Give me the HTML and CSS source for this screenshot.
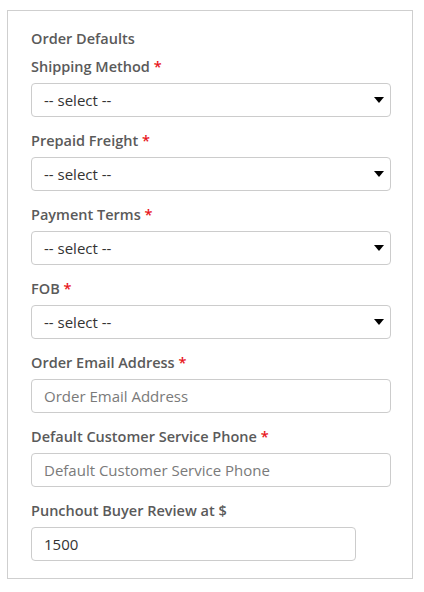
FILE: index.html
```html
<!DOCTYPE html>
<html>
<head>
<meta charset="utf-8">
<link rel="stylesheet" href="styles.css">
</head>
<body>
<div class="panel">
  <div class="heading">Order Defaults</div>
  <div class="field">
    <div class="label">Shipping Method <span class="req">*</span></div>
    <div class="control select"><span>-- select --</span><span class="caret"></span></div>
  </div>
  <div class="field">
    <div class="label">Prepaid Freight <span class="req">*</span></div>
    <div class="control select"><span>-- select --</span><span class="caret"></span></div>
  </div>
  <div class="field">
    <div class="label">Payment Terms <span class="req">*</span></div>
    <div class="control select"><span>-- select --</span><span class="caret"></span></div>
  </div>
  <div class="field">
    <div class="label">FOB <span class="req">*</span></div>
    <div class="control select"><span>-- select --</span><span class="caret"></span></div>
  </div>
  <div class="field">
    <div class="label">Order Email Address <span class="req">*</span></div>
    <div class="control placeholder">Order Email Address</div>
  </div>
  <div class="field">
    <div class="label">Default Customer Service Phone <span class="req">*</span></div>
    <div class="control placeholder">Default Customer Service Phone</div>
  </div>
  <div class="field last">
    <div class="label">Punchout Buyer Review at $</div>
    <div class="control short">1500</div>
  </div>
</div>
</body>
</html>
```
FILE: styles.css
```css
* { box-sizing: border-box; }
html, body { margin: 0; padding: 0; background: #fff; }
body { font-family: "Open Sans", "Liberation Sans", sans-serif; font-size: 14px; color: #333; }
.panel {
  margin: 10px 0 0 7px;
  width: 406px;
  height: 569px;
  border: 1px solid #cfcfcf;
  padding: 18px 21px 0 23px;
}
.heading {
  line-height: 20px;
  font-size: 14.5px;
  font-weight: 600;
  color: #5a5a5a;
  margin-bottom: 8px;
}
.field { margin-bottom: 14px; }
.field.last { margin-bottom: 0; }
.label {
  line-height: 20px;
  font-size: 14.5px;
  font-weight: 600;
  color: #5a5a5a;
  margin-bottom: 6px;
}
.req { color: #e8151b; }
.control {
  height: 34px;
  border: 1px solid #cccccc;
  border-radius: 4px;
  padding: 0 12px;
  display: flex;
  align-items: center;
  color: #333;
  background: #fff;
  font-size: 15px;
}
.select { justify-content: space-between; padding-right: 6px; }
.caret {
  width: 0; height: 0;
  border-left: 5px solid transparent;
  border-right: 5px solid transparent;
  border-top: 6px solid #000;
}
.placeholder { color: #7a7a7a; }
.short { width: 325px; }
```
